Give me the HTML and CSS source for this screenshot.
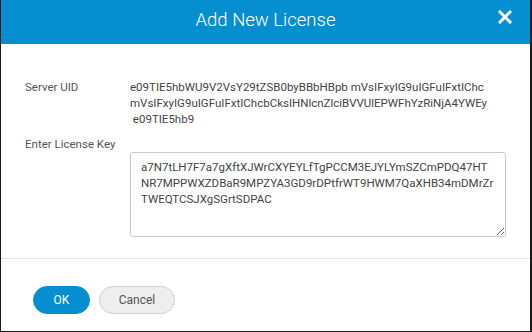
FILE: index.html
```html
<!DOCTYPE html>
<html>
<head>
<meta charset="utf-8">
<link rel="stylesheet" href="styles.css">
</head>
<body>
<div class="dialog">
  <div class="header">
    <span class="title">Add New License</span>
    <button class="close" aria-label="Close">
      <svg width="14" height="14" viewBox="0 0 14 14"><path d="M2 2 L12 12 M12 2 L2 12" stroke="#fff" stroke-width="3" stroke-linecap="square"/></svg>
    </button>
  </div>
  <div class="content">
    <div class="label">Server UID</div>
    <div class="value">e09TIE5hbWU9V2VsY29tZSB0byBBbHBpb mVsIFxyIG9uIGFuIFxtIChc<br>mVsIFxyIG9uIGFuIFxtIChcbCksIHNlcnZlciBVVUlEPWFhYzRiNjA4YWEy<br>&nbsp;e09TIE5hb9</div>
    <div class="label key-label">Enter License Key</div>
    <div class="value">
      <textarea class="key">a7N7tLH7F7a7gXftXJWrCXYEYLfTgPCCM3EJYLYmSZCmPDQ47HTNR7MPPWXZDBaR9MPZYA3GD9rDPtfrWT9HWM7QaXHB34mDMrZrTWEQTCSJXgSGrtSDPAC</textarea>
    </div>
  </div>
  <div class="footer">
    <button class="btn btn-primary">OK</button>
    <button class="btn btn-default">Cancel</button>
  </div>
</div>
</body>
</html>
```

FILE: styles.css
```css
html, body {
  margin: 0;
  padding: 0;
  background: #fff;
}
.dialog {
  width: 532px;
  height: 332px;
  box-sizing: border-box;
  border-left: 1px solid #1b1b1b;
  border-right: 2px solid #1b1b1b;
  border-bottom: 1px solid #1b1b1b;
  font-family: Roboto, "Liberation Sans", sans-serif;
  display: flex;
  flex-direction: column;
  background: #fff;
}
.header {
  height: 44px;
  background: #068fd0;
  position: relative;
  display: flex;
  justify-content: center;
  align-items: center;
  flex: none;
}
.title {
  color: #fff;
  font-size: 18.5px;
  font-weight: 300;
  margin-top: -4px;
}
.close {
  position: absolute;
  right: 18px;
  top: 10px;
  width: 14px;
  height: 14px;
  padding: 0;
  border: 0;
  background: transparent;
  display: flex;
}
.content {
  display: grid;
  grid-template-columns: 105px 1fr;
  row-gap: 9px;
  padding: 35px 24px 21px 24px;
  border-bottom: 1px solid #e3e3e3;
  font-size: 11.5px;
  line-height: 16px;
}
.label {
  color: #555;
}
.value {
  color: #444;
}
.key {
  display: block;
  margin-top: 16px;
  width: 100%;
  height: 85px;
  box-sizing: border-box;
  border: 1px solid #c8c8c8;
  border-radius: 3px;
  padding: 6px 10px;
  font-family: Roboto, "Liberation Sans", sans-serif;
  font-size: 11.5px;
  line-height: 16px;
  color: #444;
  resize: vertical;
  word-break: break-all;
}
.footer {
  display: flex;
  gap: 9px;
  padding: 27px 0 0 32px;
}
.btn {
  height: 28px;
  border-radius: 14px;
  font-family: Roboto, "Liberation Sans", sans-serif;
  font-size: 12px;
  padding: 0;
}
.btn-primary {
  width: 57px;
  background: #068fd0;
  color: #fff;
  border: 1px solid #068fd0;
}
.btn-default {
  width: 76px;
  background: #eeeeee;
  color: #555;
  border: 1px solid #cfcfcf;
}
```
